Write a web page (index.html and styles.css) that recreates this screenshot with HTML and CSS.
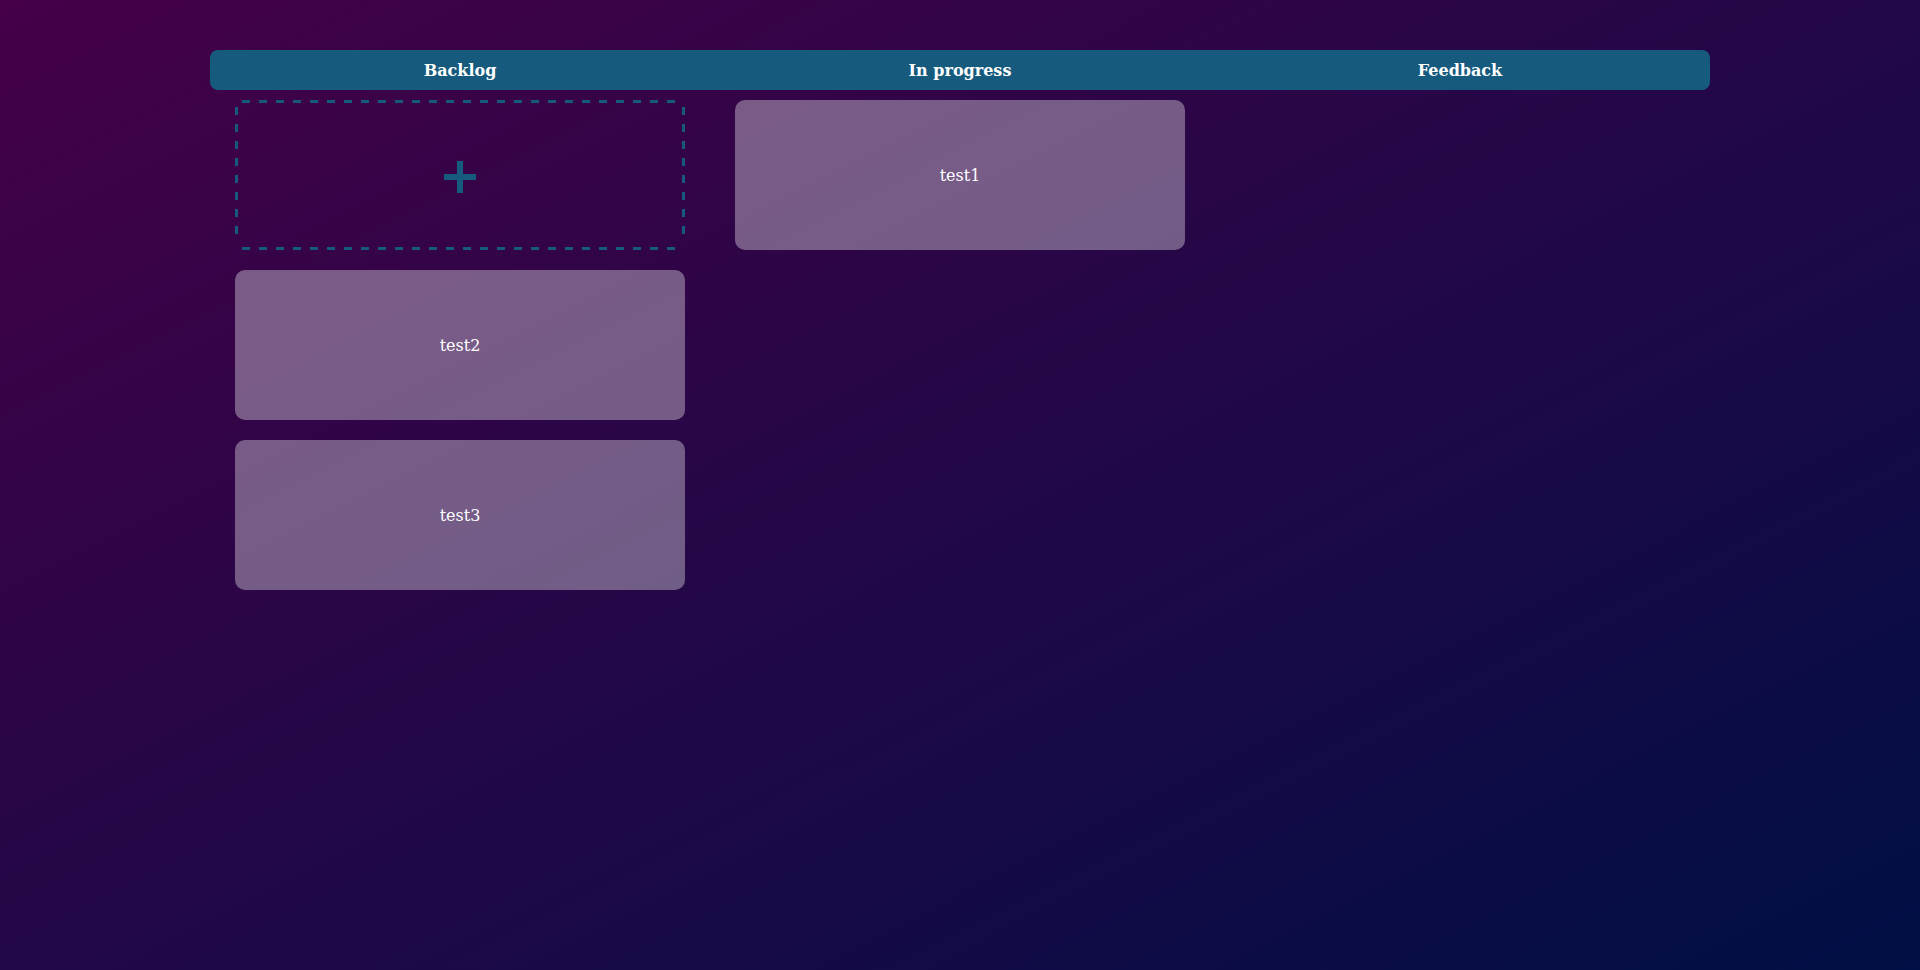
FILE: index.html
```html
<!DOCTYPE html>
<html>
<head>
<meta charset="utf-8">
<link rel="stylesheet" href="styles.css">
</head>
<body>
<div class="board">
  <div class="header">
    <div class="title">Backlog</div>
    <div class="title">In progress</div>
    <div class="title">Feedback</div>
  </div>
  <div class="columns">
    <div class="column">
      <div class="card add">
        <svg class="plus" width="32" height="32" viewBox="0 0 32 32"><rect x="13" y="0" width="6" height="32" fill="#165a7e"/><rect x="0" y="13" width="32" height="6" fill="#165a7e"/></svg>
      </div>
      <div class="card">test2</div>
      <div class="card">test3</div>
    </div>
    <div class="column">
      <div class="card">test1</div>
    </div>
    <div class="column"></div>
  </div>
</div>
</body>
</html>
```
FILE: styles.css
```css
html, body {
  margin: 0;
  padding: 0;
  width: 1920px;
  height: 970px;
}
body {
  background: linear-gradient(to bottom right, #450048, #000f45);
  font-family: "DejaVu Serif", serif;
  color: #fff;
}
.board {
  width: 1500px;
  margin: 0 auto;
  padding-top: 50px;
}
.header {
  display: grid;
  grid-template-columns: repeat(3, 1fr);
  height: 40px;
  background: #165a7e;
  border-radius: 8px;
}
.title {
  display: flex;
  align-items: center;
  justify-content: center;
  font-weight: bold;
  font-size: 16px;
}
.columns {
  display: grid;
  grid-template-columns: repeat(3, 1fr);
  padding-top: 10px;
}
.column {
  display: flex;
  flex-direction: column;
  gap: 20px;
  padding: 0 25px;
}
.card {
  height: 150px;
  box-sizing: border-box;
  border-radius: 10px;
  background: rgba(255, 255, 255, 0.35);
  display: flex;
  align-items: center;
  justify-content: center;
  font-size: 16px;
}
.card.add {
  border-radius: 0;
  background:
    repeating-linear-gradient(to right, #165a7e 0 8px, transparent 8px 17px) 7px 0 / calc(100% - 14px) 3px no-repeat,
    repeating-linear-gradient(to right, #165a7e 0 8px, transparent 8px 17px) 7px 100% / calc(100% - 14px) 3px no-repeat,
    repeating-linear-gradient(to bottom, #165a7e 0 8px, transparent 8px 17px) 0 7px / 3px calc(100% - 14px) no-repeat,
    repeating-linear-gradient(to bottom, #165a7e 0 8px, transparent 8px 17px) 100% 7px / 3px calc(100% - 14px) no-repeat;
}
.plus {
  margin-top: 4px;
}
```
